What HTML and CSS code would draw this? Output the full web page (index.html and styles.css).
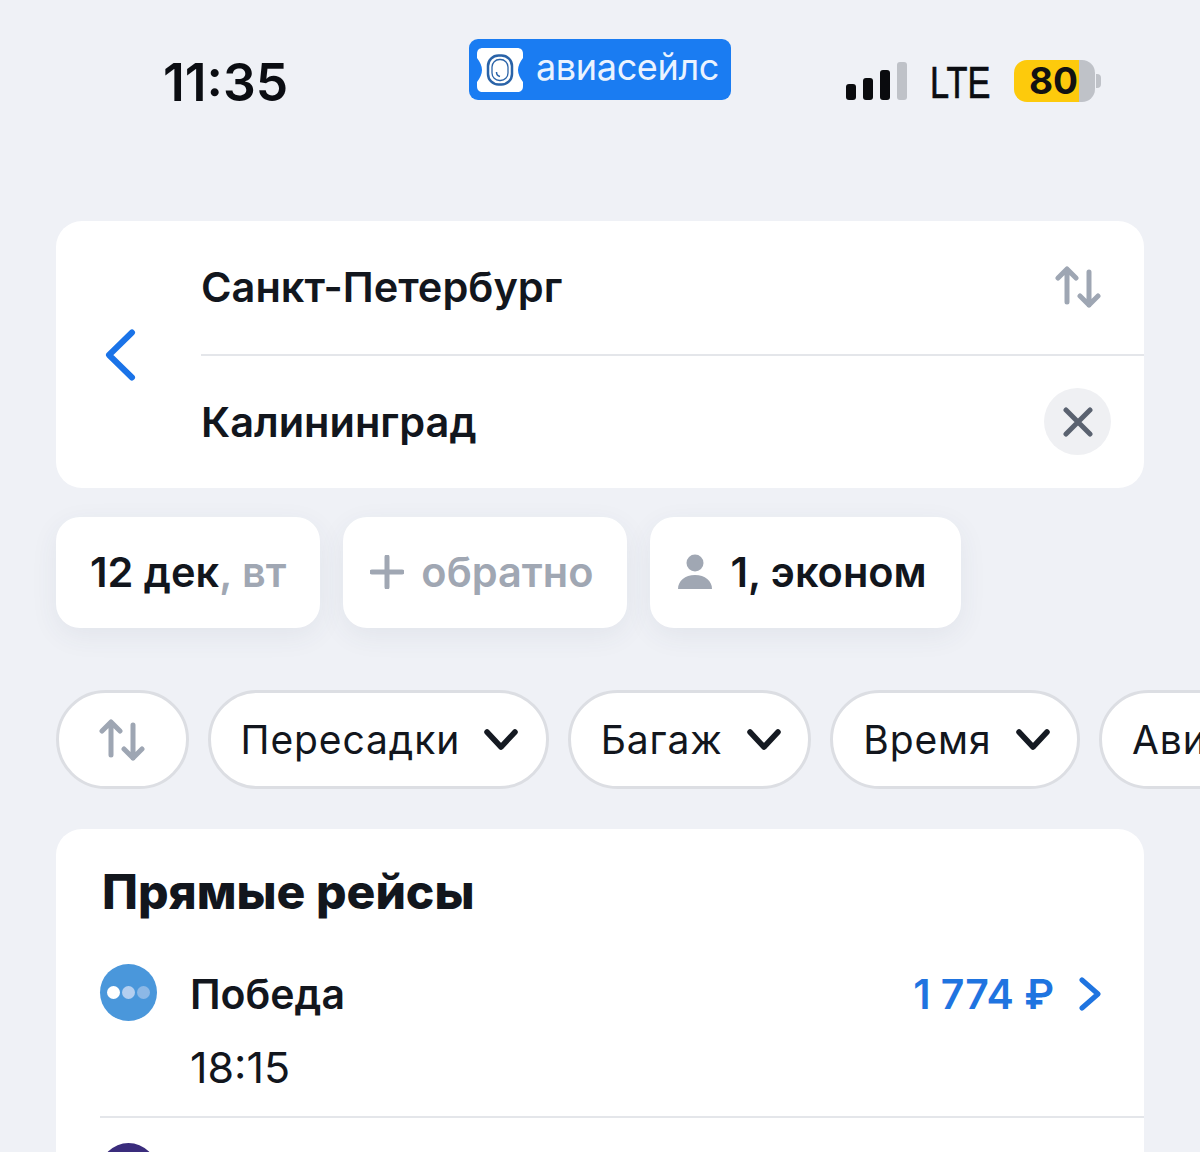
FILE: index.html
```html
<!DOCTYPE html>
<html lang="ru">
<head>
<meta charset="utf-8">
<title>Авиасейлс</title>
<link rel="stylesheet" href="styles.css">
</head>
<body>
<div class="page">
  <header class="status">
    <div class="clock">11:35</div>
    <div class="brand">
      <svg class="brand-icon" width="46" height="44" viewBox="0 0 46 44"><path d="M6 0H40C44 0 46 2 46 6V10C43 14 41 18 41 22C41 26 43 30 46 34V38C46 42 44 44 40 44H6C2 44 0 42 0 38V34C3 30 5 26 5 22C5 18 3 14 0 10V6C0 2 2 0 6 0Z" fill="#fff"/><rect x="11" y="7.500" width="24" height="29" rx="10.500" fill="none" stroke="#2a63a8" stroke-width="2.500"/><rect x="15" y="11.500" width="16" height="21" rx="7.500" fill="#fff" stroke="#2a63a8" stroke-width="1.300"/><path d="M19.500 24c0 2.500 1.500 4 3.500 4.500" fill="none" stroke="#2a63a8" stroke-width="1.500"/></svg>
      <span class="brand-name">авиасейлс</span>
    </div>
    <div class="indicators">
      <span class="signal"><i class="b1"></i><i class="b2"></i><i class="b3"></i><i class="b4"></i></span>
      <span class="lte">LTE</span>
      <span class="battery"><span class="level">80</span></span><span class="nub"></span>
    </div>
  </header>

  <section class="search">
    <div class="back">
      <svg width="32" height="52" viewBox="0 0 32 52"><path d="M28 3.500 L5 26 L28 48.500" fill="none" stroke="#1a73e8" stroke-width="6" stroke-linecap="round" stroke-linejoin="round"/></svg>
    </div>
    <div class="fields">
      <div class="field divided">
        <span>Санкт-Петербург</span>
        <svg class="swap" width="46" height="42" viewBox="0 0 46 42"><path d="M12 36V3M3 12L12 3L21 12" fill="none" stroke="#9ea6b3" stroke-width="5" stroke-linecap="round" stroke-linejoin="round"/><path d="M34 6V39M25 30L34 39L43 30" fill="none" stroke="#9ea6b3" stroke-width="5" stroke-linecap="round" stroke-linejoin="round"/></svg>
      </div>
      <div class="field">
        <span>Калининград</span>
        <span class="clear"><svg width="30" height="30" viewBox="0 0 30 30"><path d="M3 3L27 27M27 3L3 27" fill="none" stroke="#5a6270" stroke-width="5" stroke-linecap="round"/></svg></span>
      </div>
    </div>
  </section>

  <nav class="chips">
    <div class="chip date"><span>12 дек</span><span class="muted">, вт</span></div>
    <div class="chip trip">
      <svg width="34" height="34" viewBox="0 0 34 34"><path d="M17 2V32M2 17H32" fill="none" stroke="#a0a7b3" stroke-width="5" stroke-linecap="round"/></svg>
      <span class="muted">обратно</span>
    </div>
    <div class="chip trip">
      <svg width="36" height="36" viewBox="0 0 36 36"><circle cx="18" cy="9" r="8.500" fill="#a0a7b3"/><path d="M1 35C1 27 8 21 18 21C28 21 35 27 35 35Z" fill="#a0a7b3"/></svg>
      <span>1, эконом</span>
    </div>
  </nav>

  <div class="filters">
    <div class="pill sort">
      <svg width="46" height="42" viewBox="0 0 46 42"><path d="M12 36V3M3 12L12 3L21 12" fill="none" stroke="#9ea6b3" stroke-width="5" stroke-linecap="round" stroke-linejoin="round"/><path d="M34 6V39M25 30L34 39L43 30" fill="none" stroke="#9ea6b3" stroke-width="5" stroke-linecap="round" stroke-linejoin="round"/></svg>
    </div>
    <div class="pill"><span>Пересадки</span><svg class="chev" width="34" height="22" viewBox="0 0 34 22"><path d="M3 3L17 18L31 3" fill="none" stroke="#151a22" stroke-width="5.500" stroke-linecap="round" stroke-linejoin="round"/></svg></div>
    <div class="pill"><span>Багаж</span><svg class="chev" width="34" height="22" viewBox="0 0 34 22"><path d="M3 3L17 18L31 3" fill="none" stroke="#151a22" stroke-width="5.500" stroke-linecap="round" stroke-linejoin="round"/></svg></div>
    <div class="pill"><span>Время</span><svg class="chev" width="34" height="22" viewBox="0 0 34 22"><path d="M3 3L17 18L31 3" fill="none" stroke="#151a22" stroke-width="5.500" stroke-linecap="round" stroke-linejoin="round"/></svg></div>
    <div class="pill"><span>Авиакомпании</span></div>
  </div>

  <section class="results">
    <h2>Прямые рейсы</h2>
    <div class="flight">
      <div class="logo"><i class="d1"></i><i class="d2"></i><i class="d3"></i></div>
      <div class="info">
        <div class="info-top">
          <span class="airline">Победа</span>
          <span class="price">1 774 ₽<svg width="22" height="34" viewBox="0 0 22 34"><path d="M3 3L19 17L3 31" fill="none" stroke="#1f74e0" stroke-width="5" stroke-linecap="round" stroke-linejoin="round"/></svg></span>
        </div>
        <div class="time">18:15</div>
      </div>
    </div>
    <div class="next-logo"></div>
  </section>
</div>
</body>
</html>
```
FILE: styles.css
```css
* { box-sizing: border-box; }
html, body { margin: 0; padding: 0; }
body { background: #eff1f6; font-family: Inter, "Liberation Sans", sans-serif; color: #12161d; }
.page { height: 1152px; overflow: hidden; }

.status { height: 221px; padding: 39px 99px 0 163px; display: flex; align-items: flex-start; }
.clock { width: 306px; flex: none; font-size: 51.500px; font-weight: 600; line-height: 58px; margin-top: 14px; color: #0b0d12; }
.brand { width: 262px; height: 61px; background: #1a7cf2; border-radius: 9px; display: flex; align-items: center; gap: 13px; padding: 0 0 0 8px; flex: none; }
.brand-name { font-size: 36px; line-height: 40px; letter-spacing: -0.35px; color: #eaf3ff; margin-bottom: 5px; }
.brand-icon { flex: none; }
.indicators { display: flex; align-items: center; margin: 21px 0 0 auto; height: 42px; }
.signal { display: flex; align-items: flex-end; gap: 7px; height: 38px; margin-right: 23px; }
.signal i { display: block; width: 10px; border-radius: 3px; background: #0a0b0e; }
.signal .b1 { height: 16px; }
.signal .b2 { height: 22px; }
.signal .b3 { height: 30px; }
.signal .b4 { height: 38px; background: #bfc2c8; }
.lte { font-size: 44px; line-height: 42px; font-weight: 400; color: #0b0d12; width: 84px; transform: scaleX(.78); transform-origin: left; font-family: "Liberation Sans", sans-serif; -webkit-text-stroke: .7px #0b0d12; padding-top: 3px; }
.battery { width: 81px; height: 42px; border-radius: 13px; background: linear-gradient(90deg, #fdca0c 0 65px, #bfc2c8 65px); display: block; }
.level { display: block; font-size: 37px; line-height: 42px; font-weight: 700; padding-left: 15px; color: #121212; }
.nub { width: 5px; height: 14px; background: #bfc2c8; border-radius: 0 4px 4px 0; margin-left: 1px; }

.search { margin: 0 56px; height: 267px; background: #fff; border-radius: 26px; display: flex; overflow: hidden; }
.back { width: 145px; flex: none; display: flex; align-items: center; padding-left: 48px; }
.fields { flex: 1; display: flex; flex-direction: column; }
.field { flex: 1; display: flex; align-items: center; justify-content: space-between; font-size: 41.500px; font-weight: 600; padding-right: 33px; }
.field.divided { border-bottom: 2px solid #e4e6ea; padding-right: 43px; }
.clear { width: 67px; height: 67px; border-radius: 50%; background: #eff0f3; display: flex; align-items: center; justify-content: center; }

.chips { display: flex; gap: 23px; margin: 29px 56px 0; }
.chip { height: 111px; background: #fff; border-radius: 24px; display: flex; align-items: center; font-size: 41.500px; font-weight: 600; padding: 0 34px 2px; box-shadow: 0 8px 28px rgba(60, 70, 100, .07); }
.muted { color: #a0a7b3; }
.trip { gap: 17px; padding: 0 34px 2px 27px; }

.filters { display: flex; gap: 19px; margin: 62px 0 0 56px; width: 1300px; }
.pill { flex: none; height: 99px; background: #fff; border: 3px solid #dcdee3; border-radius: 50px; display: flex; align-items: center; gap: 24px; padding: 0 27.500px 0 30px; font-size: 39px; font-weight: 400; letter-spacing: .9px; }
.pill.sort { width: 132.500px; justify-content: center; padding: 0; }
.chev { flex: none; }

.results { margin: 40px 56px 0; height: 400px; background: #fff; border-radius: 26px; padding: 34px 0 0 44px; }
.results h2 { margin: 0 0 0 2px; font-size: 48px; line-height: 58px; font-weight: 800; }
.flight { display: flex; gap: 33px; margin-top: 43px; height: 154px; border-bottom: 2px solid #e4e6ea; }
.logo { width: 57px; height: 57px; border-radius: 50%; background: #4a97db; display: flex; align-items: center; justify-content: center; gap: 2px; flex: none; }
.logo i { display: block; width: 13px; height: 13px; border-radius: 50%; }
.logo .d1 { background: #fff; }
.logo .d2 { background: #b4cff0; }
.logo .d3 { background: #8cb8e6; }
.info { flex: 1; padding-right: 43px; }
.info-top { display: flex; justify-content: space-between; align-items: center; height: 60px; }
.airline { font-size: 41px; font-weight: 600; }
.price { font-size: 41px; font-weight: 600; color: #1f74e0; display: flex; align-items: center; gap: 25px; }
.time { font-size: 43px; line-height: 50px; margin-top: 18px; }
.next-logo { width: 57px; height: 57px; border-radius: 50%; background: #3a2c7c; margin-top: 25px; }
```
